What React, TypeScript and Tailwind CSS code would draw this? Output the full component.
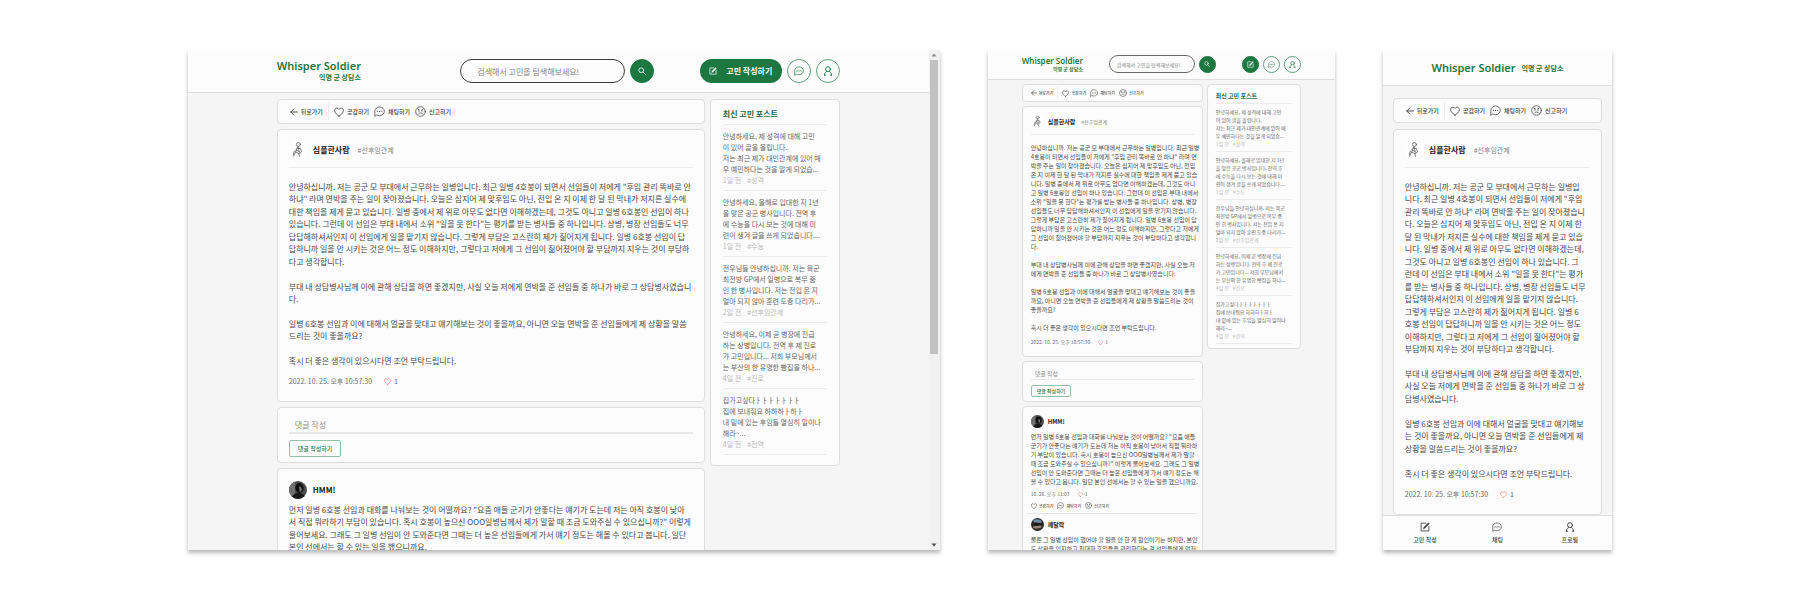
import React from "react";
import clsx from "clsx";

type Size = "lg" | "sm";

/* ---------- icons ---------- */

type IconProps = { className?: string };

const stroke = {
  fill: "none",
  stroke: "currentColor",
  strokeLinecap: "round",
  strokeLinejoin: "round",
} as const;

function ArrowLeft({ className }: IconProps) {
  return (
    <svg viewBox="0 0 16 16" className={className} aria-hidden="true" {...stroke} strokeWidth={1.8}>
      <path d="M15 8H1.5M7.5 2 1.5 8l6 6" />
    </svg>
  );
}

function Heart({ className }: IconProps) {
  return (
    <svg viewBox="0 0 16 16" className={className} aria-hidden="true" {...stroke} strokeWidth={1.3}>
      <path d="M8 14.6C5 12.6 1 9.6 1 5.6 1 3.4 2.6 1.8 4.6 1.8c1.5 0 2.7.8 3.4 2.1.7-1.3 1.9-2.1 3.4-2.1 2 0 3.6 1.6 3.6 3.8 0 4-4 7-7 9Z" />
    </svg>
  );
}

function Chat({ className }: IconProps) {
  return (
    <svg viewBox="0 0 16 16" className={className} aria-hidden="true" {...stroke} strokeWidth={1.1}>
      <path d="M1.2 14.6V7.8C1.2 4.2 4.2 1.4 8 1.4s7 2.8 7 6.3-3 6.3-7 6.3c-1.4 0-2.7-.3-3.8-.8Z" />
      <path d="M4.8 7.8h.1M8 7.8h.1M11.2 7.8h.1" strokeWidth={1.7} />
    </svg>
  );
}

function Frown({ className }: IconProps) {
  return (
    <svg viewBox="0 0 16 16" className={className} aria-hidden="true" {...stroke} strokeWidth={1.1}>
      <circle cx="8" cy="8" r="7" />
      <path d="M5 11.6c.8-1 1.8-1.5 3-1.5s2.2.5 3 1.5M4.3 4.8l2.2 1.1M11.7 4.8 9.5 5.9" />
      <path d="M5.6 7.1h.1M10.3 7.1h.1" strokeWidth={1.7} />
    </svg>
  );
}

function Search({ className }: IconProps) {
  return (
    <svg viewBox="0 0 16 16" className={className} aria-hidden="true" {...stroke} strokeWidth={1.6}>
      <circle cx="6.5" cy="6.5" r="4.8" />
      <path d="m10.2 10.2 4.6 4.6" />
    </svg>
  );
}

function Pencil({ className }: IconProps) {
  return (
    <svg viewBox="0 0 16 16" className={className} aria-hidden="true" {...stroke} strokeWidth={1.4}>
      <path d="M9.5 1.8H1.7v12.5h12.5V7" />
      <path d="m5.6 10.6.6-2.4 7.3-7 1.5 1.6-7.2 7.1Z" fill="currentColor" strokeWidth={0.8} />
    </svg>
  );
}

function Person({ className }: IconProps) {
  return (
    <svg viewBox="0 0 16 16" className={className} aria-hidden="true" {...stroke} strokeWidth={1.5}>
      <circle cx="8" cy="5" r="3.9" />
      <path d="M5.8 8.4c0 1.8-3.6 2.2-3.6 6.2M10.2 8.4c0 1.8 3.6 2.2 3.6 6.2M2.2 14.6h2M11.8 14.6h2" />
    </svg>
  );
}

function Sketch({ className }: IconProps) {
  return (
    <svg viewBox="0 0 18 18" className={className} aria-hidden="true" {...stroke} strokeWidth={0.7}>
      <circle cx="9" cy="9" r="9" fill="#ffffff" stroke="none" />
      <g stroke="#4a4a4a">
        <circle cx="9.4" cy="3.4" r="2" />
        <path d="M9 5.4 8 7.2l3.4.4 1.2 3.4-2.4 1.4M8 7.2 6.6 11l2.8 1.4M9.6 6.5l.4 4M6.6 11l-2 4.2M9.6 12.2l1 3.3M7 8.8l3.6 2.2M5.4 10l-1.2 4" />
      </g>
    </svg>
  );
}

function Portrait({ className, tone }: IconProps & { tone: "mono" | "blue" }) {
  return (
    <svg viewBox="0 0 18 18" className={clsx("rounded-full", className)} aria-hidden="true">
      <rect width="18" height="18" fill={tone === "mono" ? "#4c4c4c" : "#2b2724"} />
      {tone === "mono" ? (
        <>
          <path d="M0 0h6v18H0z" fill="#707070" />
          <ellipse cx="10.5" cy="7" rx="4.2" ry="5" fill="#111111" />
          <path d="M10 5.5c2 0 3 1 2.6 4l-1.8 2Z" fill="#777777" />
          <path d="M2 18c1-5 5-6 8-6s6 2 7 6Z" fill="#191919" />
        </>
      ) : (
        <>
          <path d="M3 3c4-2 8-2 12 1l-1 3-10-1Z" fill="#6d8fa3" />
          <path d="M2 13c3-3 7-2 9-4l4 2-2 3-6 1Z" fill="#9a8878" />
          <path d="M4 8l8-1 3 3-8 1Z" fill="#151515" />
        </>
      )}
    </svg>
  );
}

/* ---------- content ---------- */

const bodyWide = [
  [
    "안녕하십니까. 저는 공군 모 부대에서 근무하는 일병입니다. 최근 일병 4호봉이 되면서 선임들이 저에게 \"후임 관리 똑바로 안",
    "하냐\" 라며 면박을 주는 일이 잦아졌습니다. 오늘은 심지어 제 맞후임도 아닌, 전입 온 지 이제 한 달 된 막내가 저지른 실수에",
    "대한 책임을 제게 묻고 있습니다. 일병 중에서 제 위로 아무도 없다면 이해하겠는데, 그것도 아니고 일병 6호봉인 선임이 하나",
    "있습니다. 그런데 이 선임은 부대 내에서 소위 \"일을 못 한다\"는 평가를 받는 병사들 중 하나입니다. 상병, 병장 선임들도 너무",
    "답답해하셔서인지 이 선임에게 일을 맡기지 않습니다. 그렇게 부담은 고스란히 제가 짊어지게 됩니다. 일병 6호봉 선임이 답",
    "답하니까 일을 안 시키는 것은 어느 정도 이해하지만, 그렇다고 저에게 그 선임이 짊어졌어야 할 부담까지 지우는 것이 부당하",
    "다고 생각합니다.",
  ],
  [
    "부대 내 상담병사님께 이에 관해 상담을 하면 좋겠지만, 사실 오늘 저에게 면박을 준 선임들 중 하나가 바로 그 상담병사였습니",
    "다.",
  ],
  [
    "일병 6호봉 선임과 이에 대해서 얼굴을 맞대고 얘기해보는 것이 좋을까요, 아니면 오늘 면박을 준 선임들에게 제 상황을 말씀",
    "드리는 것이 좋을까요?",
  ],
  ["혹시 더 좋은 생각이 있으시다면 조언 부탁드립니다."],
];

const bodyMedium = [
  [
    "안녕하십니까. 저는 공군 모 부대에서 근무하는 일병입니다. 최근 일병",
    "4호봉이 되면서 선임들이 저에게 \"후임 관리 똑바로 안 하냐\" 라며 면",
    "박을 주는 일이 잦아졌습니다. 오늘은 심지어 제 맞후임도 아닌, 전입",
    "온 지 이제 한 달 된 막내가 저지른 실수에 대한 책임을 제게 묻고 있습",
    "니다. 일병 중에서 제 위로 아무도 없다면 이해하겠는데, 그것도 아니",
    "고 일병 6호봉인 선임이 하나 있습니다. 그런데 이 선임은 부대 내에서",
    "소위 \"일을 못 한다\"는 평가를 받는 병사들 중 하나입니다. 상병, 병장",
    "선임들도 너무 답답해하셔서인지 이 선임에게 일을 맡기지 않습니다.",
    "그렇게 부담은 고스란히 제가 짊어지게 됩니다. 일병 6호봉 선임이 답",
    "답하니까 일을 안 시키는 것은 어느 정도 이해하지만, 그렇다고 저에게",
    "그 선임이 짊어졌어야 할 부담까지 지우는 것이 부당하다고 생각합니",
    "다.",
  ],
  [
    "부대 내 상담병사님께 이에 관해 상담을 하면 좋겠지만, 사실 오늘 저",
    "에게 면박을 준 선임들 중 하나가 바로 그 상담병사였습니다.",
  ],
  [
    "일병 6호봉 선임과 이에 대해서 얼굴을 맞대고 얘기해보는 것이 좋을",
    "까요, 아니면 오늘 면박을 준 선임들에게 제 상황을 말씀드리는 것이",
    "좋을까요?",
  ],
  ["혹시 더 좋은 생각이 있으시다면 조언 부탁드립니다."],
];

const bodyNarrow = [
  [
    "안녕하십니까. 저는 공군 모 부대에서 근무하는 일병입",
    "니다. 최근 일병 4호봉이 되면서 선임들이 저에게 \"후임",
    "관리 똑바로 안 하냐\" 라며 면박을 주는 일이 잦아졌습니",
    "다. 오늘은 심지어 제 맞후임도 아닌, 전입 온 지 이제 한",
    "달 된 막내가 저지른 실수에 대한 책임을 제게 묻고 있습",
    "니다. 일병 중에서 제 위로 아무도 없다면 이해하겠는데,",
    "그것도 아니고 일병 6호봉인 선임이 하나 있습니다. 그",
    "런데 이 선임은 부대 내에서 소위 \"일을 못 한다\"는 평가",
    "를 받는 병사들 중 하나입니다. 상병, 병장 선임들도 너무",
    "답답해하셔서인지 이 선임에게 일을 맡기지 않습니다.",
    "그렇게 부담은 고스란히 제가 짊어지게 됩니다. 일병 6",
    "호봉 선임이 답답하니까 일을 안 시키는 것은 어느 정도",
    "이해하지만, 그렇다고 저에게 그 선임이 짊어졌어야 할",
    "부담까지 지우는 것이 부당하다고 생각합니다.",
  ],
  [
    "부대 내 상담병사님께 이에 관해 상담을 하면 좋겠지만,",
    "사실 오늘 저에게 면박을 준 선임들 중 하나가 바로 그 상",
    "담병사였습니다.",
  ],
  [
    "일병 6호봉 선임과 이에 대해서 얼굴을 맞대고 얘기해보",
    "는 것이 좋을까요, 아니면 오늘 면박을 준 선임들에게 제",
    "상황을 말씀드리는 것이 좋을까요?",
  ],
  ["혹시 더 좋은 생각이 있으시다면 조언 부탁드립니다."],
];

const replyWide = [
  [
    "먼저 일병 6호봉 선임과 대화를 나눠보는 것이 어떨까요? \"요즘 애들 군기가 안좋다는 얘기가 도는데 저는 아직 호봉이 낮아",
    "서 직접 뭐라하기 부담이 있습니다. 혹시 호봉이 높으신 OOO일병님께서 제가 말할 때 조금 도와주실 수 있으십니까?\" 이렇게",
    "물어보세요. 그래도 그 일병 선임이 안 도와준다면 그때는 더 높은 선임들에게 가서 얘기 정도는 해볼 수 있다고 봅니다. 일단",
    "본인 선에서는 할 수 있는 일을 했으니까요.",
  ],
];

const replyMedium = [
  [
    "먼저 일병 6호봉 선임과 대화를 나눠보는 것이 어떨까요? \"요즘 애들",
    "군기가 안좋다는 얘기가 도는데 저는 아직 호봉이 낮아서 직접 뭐라하",
    "기 부담이 있습니다. 혹시 호봉이 높으신 OOO일병님께서 제가 말할",
    "때 조금 도와주실 수 있으십니까?\" 이렇게 물어보세요. 그래도 그 일병",
    "선임이 안 도와준다면 그때는 더 높은 선임들에게 가서 얘기 정도는 해",
    "볼 수 있다고 봅니다. 일단 본인 선에서는 할 수 있는 일을 했으니까요.",
  ],
];

const secondReply = [
  [
    "물론 그 일병 선임이 했어야 할 일을 안 한 게 원인이기는 하지만, 본인",
    "도 상황을 인지하고 최대한 후임들을 관리한다는 걸 선임들에게 먼저",
  ],
];

const posts = [
  {
    lines: ["안녕하세요, 제 성격에 대해 고민", "이 있어 글을 올립니다.", "저는 최근 제가 대인관계에 있어 매", "우 예민하다는 것을 알게 되었습..."],
    age: "1일 전",
    tag: "#성격",
  },
  {
    lines: ["안녕하세요, 올해로 입대한 지 1년", "을 맞은 공군 병사입니다. 전역 후", "에 수능을 다시 보는 것에 대해 미", "련이 생겨 글을 쓰게 되었습니다...."],
    age: "1일 전",
    tag: "#수능",
  },
  {
    lines: ["전우님들 안녕하십니까. 저는 육군", "최전방 GP에서 일병으로 복무 중", "인 한 병사입니다. 저는 전입 온 지", "얼마 되지 않아 훈련 도중 다리가..."],
    age: "2일 전",
    tag: "#선후임관계",
  },
  {
    lines: ["안녕하세요, 이제 곧 병장에 진급", "하는 상병입니다. 전역 후 제 진로", "가 고민입니다... 저희 부모님께서", "는 부산의 한 유명한 빵집을 하나..."],
    age: "4일 전",
    tag: "#진로",
  },
  {
    lines: ["집가고싶다ㅏㅏㅏㅏㅏㅏㅏ", "집에 보내줘요 하하하ㅏ하ㅏ", "내 밑에 있는 후임들 열심히 일이나", "해라~..."],
    age: "4일 전",
    tag: "#전역",
  },
];

/* ---------- shared pieces ---------- */

function Card({ className, children }: { className?: string; children: React.ReactNode }) {
  return (
    <section className={clsx("shrink-0 rounded border border-[#dedede] bg-[#fcfcfc]", className)}>{children}</section>
  );
}

function Prose({ paragraphs, size }: { paragraphs: string[][]; size: Size }) {
  return (
    <div
      className={clsx(
        "flex flex-col whitespace-nowrap text-[#4a4a4a]",
        size === "lg" ? "gap-3 text-[8px]" : "gap-[9px] text-[6px]"
      )}
    >
      {paragraphs.map((lines) => (
        <p key={lines[0]}>
          {lines.map((line) => (
            <span
              key={line}
              className={clsx("block", size === "lg" ? "odd:leading-[13px] even:leading-[12px]" : "leading-[9px]")}
            >
              {line}
            </span>
          ))}
        </p>
      ))}
    </div>
  );
}

function Action({ icon, label, size }: { icon: React.ReactNode; label: string; size: Size }) {
  return (
    <button
      type="button"
      className={clsx(
        "flex items-center font-medium text-[#444444]",
        size === "lg" ? "gap-[3px] text-[6px]" : "gap-0.5 text-[4px]"
      )}
    >
      {icon}
      {label}
    </button>
  );
}

function Toolbar({ size }: { size: Size }) {
  const lg = size === "lg";
  const icon = lg ? "size-[11px]" : "size-2";
  return (
    <Card className={clsx("flex items-center", lg ? "h-[25px] gap-[5px] px-3" : "h-[18px] gap-1 px-2")}>
      <div className={clsx("flex items-center border-r border-[#ececec]", lg ? "h-[17px] pr-[5px]" : "h-3 pr-1")}>
        <Action size={size} icon={<ArrowLeft className={lg ? "size-2" : "size-[6px]"} />} label="뒤로가기" />
      </div>
      <Action size={size} icon={<Heart className={lg ? "size-[10px]" : "size-[7px]"} />} label="공감하기" />
      <Action size={size} icon={<Chat className={icon} />} label="채팅하기" />
      <Action size={size} icon={<Frown className={icon} />} label="신고하기" />
    </Card>
  );
}

function Meta({ date, size }: { date: string; size: Size }) {
  const lg = size === "lg";
  return (
    <div className={clsx("flex items-center text-[#6d6d6d]", lg ? "gap-3 text-[7px] leading-3" : "gap-2 text-[5px] leading-2")}>
      <time>{date}</time>
      <span className={clsx("flex items-center", lg ? "gap-[3px]" : "gap-0.5")}>
        <Heart className={clsx("text-[#ef6a6a]", lg ? "size-[7px]" : "size-[5px]")} />1
      </span>
    </div>
  );
}

function Article({ paragraphs, size }: { paragraphs: string[][]; size: Size }) {
  const lg = size === "lg";
  return (
    <Card className={lg ? "px-[11px] pt-[11px] pb-[14px]" : "px-2 pt-2 pb-[10px]"}>
      <header className={clsx("flex items-center border-b border-[#ececec]", lg ? "gap-1.5 pb-2" : "gap-1 pb-[6px]")}>
        <Sketch className={lg ? "size-[18px]" : "size-[13px]"} />
        <h2 className={clsx("font-bold text-[#222222]", lg ? "text-[8px] leading-3" : "text-[6px] leading-2")}>심플한사람</h2>
        <a href="#relations" className={clsx("ml-0.5 text-[#808080]", lg ? "text-[7px]" : "text-[5px]")}>
          #선후임관계
        </a>
      </header>
      <div className={lg ? "pt-3 pb-2" : "pt-2 pb-1.5"}>
        <Prose paragraphs={paragraphs} size={size} />
      </div>
      <Meta date="2022. 10. 25. 오후 10:57:30" size={size} />
    </Card>
  );
}

function CommentForm({ size }: { size: Size }) {
  const lg = size === "lg";
  return (
    <Card className={lg ? "px-[11px] pt-2 pb-[5px]" : "px-2 pt-[6px] pb-1"}>
      <form className={clsx("flex flex-col items-start", lg ? "gap-1.5" : "gap-[5px]")}>
        <input
          type="text"
          aria-label="댓글 작성"
          placeholder="댓글 작성"
          className={clsx(
            "w-full border-[#e8e8e8] bg-transparent outline-none placeholder:text-[#8d8d8d]",
            lg ? "h-[18px] border-b-2 px-1.5 text-[8px]" : "h-3 border-b px-1 text-[6px]"
          )}
        />
        <button
          type="button"
          className={clsx(
            "rounded-xs border border-[#93c2a8] font-medium text-[#2c7a4d]",
            lg ? "h-[17px] px-2 text-[6px]" : "h-3 px-[5px] text-[5px]"
          )}
        >
          댓글 작성하기
        </button>
      </form>
    </Card>
  );
}

function ReplyHead({ name, tone, size }: { name: string; tone: "mono" | "blue"; size: Size }) {
  const lg = size === "lg";
  return (
    <header className={clsx("flex items-center", lg ? "gap-1.5" : "gap-1")}>
      <Portrait tone={tone} className={lg ? "size-[18px]" : "size-[13px]"} />
      <h3 className={clsx("font-bold text-[#222222]", lg ? "text-[8px] leading-3" : "text-[6px] leading-2")}>{name}</h3>
    </header>
  );
}

function Latest({ size }: { size: Size }) {
  const lg = size === "lg";
  return (
    <aside
      className={clsx(
        "shrink-0 self-start rounded border border-[#dedede] bg-[#fcfcfc]",
        lg ? "w-[130px] px-3 pt-2 pb-[10px]" : "w-[94px] px-2 pt-[6px] pb-1"
      )}
    >
      <h2
        className={clsx(
          "border-b border-[#ececec] font-bold text-[#1f6b40]",
          lg ? "pb-1 text-[8px] leading-3" : "pb-0.5 text-[6px] leading-[10px]"
        )}
      >
        최신 고민 포스트
      </h2>
      <ul>
        {posts.map((post) => (
          <li
            key={post.lines[0]}
            className={clsx(
              "border-b border-[#ececec] whitespace-nowrap",
              lg ? "pt-1.5 pb-1 text-[7px] leading-[11px]" : "pt-1 pb-[3px] text-[5px] leading-2"
            )}
          >
            <a href="#post" className="block text-[#666666]">
              {post.lines.map((line) => (
                <span key={line} className="block">
                  {line}
                </span>
              ))}
            </a>
            <p className={clsx("flex text-[#b9b9b9]", lg ? "gap-1.5" : "gap-1")}>
              <span>{post.age}</span>
              <span>{post.tag}</span>
            </p>
          </li>
        ))}
      </ul>
    </aside>
  );
}

function Logo({ size }: { size: Size }) {
  const lg = size === "lg";
  return (
    <a href="#home" className="flex flex-col items-end whitespace-nowrap text-[#1c7741]">
      <span
        className={clsx(
          "font-['Noto_Sans',sans-serif] font-semibold",
          lg ? "text-[11px] leading-[13px]" : "text-[8px] leading-[9px]"
        )}
      >
        Whisper Soldier
      </span>
      <span className={clsx("font-bold", lg ? "text-[7px] leading-[11px]" : "text-[5px] leading-[7px]")}>익명 군 상담소</span>
    </a>
  );
}

function RoundButton({
  label,
  filled,
  size,
  children,
}: {
  label: string;
  filled?: boolean;
  size: Size;
  children: React.ReactNode;
}) {
  return (
    <button
      type="button"
      aria-label={label}
      className={clsx(
        "flex shrink-0 items-center justify-center rounded-full border",
        size === "lg" ? "size-6" : "size-[17px]",
        filled ? "border-[#1c7741] bg-[#1c7741] text-white" : "border-[#5fa27c] bg-[#fcfcfc] text-[#1c7741]"
      )}
    >
      {children}
    </button>
  );
}

function TopBar({ size }: { size: Size }) {
  const lg = size === "lg";
  const icon = lg ? "size-[10px]" : "size-[7px]";
  return (
    <header className={clsx("shrink-0 border-b border-[#dedede] bg-[#fcfcfc]", lg ? "h-[43px] pt-[9px]" : "h-[30px] pt-[5px]")}>
      <div className={clsx("mx-auto flex items-center justify-between", lg ? "max-w-[563px]" : "max-w-[279px]")}>
        <Logo size={size} />
        <form role="search" className={clsx("flex items-center", lg ? "ml-[54px] gap-[5px]" : "gap-1")}>
          <input
            type="text"
            aria-label="고민 검색"
            placeholder="검색해서 고민을 탐색해보세요!"
            className={clsx(
              "rounded-full border bg-[#fcfcfc] outline-none placeholder:text-[#858585]",
              lg ? "h-6 w-[165px] border-[#3d3d3d] px-4 text-[8px]" : "h-[18px] w-[86px] border-[#6a6a6a] px-[7px] text-[5px]"
            )}
          />
          <RoundButton label="검색" filled size={size}>
            <Search className={lg ? "size-2" : "size-[6px]"} />
          </RoundButton>
        </form>
        <nav className={clsx("flex items-center", lg ? "gap-[5px]" : "gap-1")}>
          {lg ? (
            <button
              type="button"
              className="flex h-6 w-[82px] items-center justify-center gap-[9px] rounded-full bg-[#1c7741] text-[8px] font-bold text-white"
            >
              <Pencil className="size-2" />
              고민 작성하기
            </button>
          ) : (
            <RoundButton label="고민 작성하기" filled size={size}>
              <Pencil className="size-[7px]" />
            </RoundButton>
          )}
          <RoundButton label="채팅" size={size}>
            <Chat className={icon} />
          </RoundButton>
          <RoundButton label="프로필" size={size}>
            <Person className={icon} />
          </RoundButton>
        </nav>
      </div>
    </header>
  );
}

/* ---------- the three screens ---------- */

const frame = "min-h-0 min-w-0 overflow-hidden bg-[#f5f5f5] shadow-[0_3px_4px_rgba(0,0,0,0.28)]";

function Scrollbar() {
  return (
    <div className="flex w-[11px] shrink-0 flex-col items-center bg-[#f1f1f1]" aria-hidden="true">
      <svg viewBox="0 0 10 10" className="size-[10px] fill-[#8a8a8a]">
        <path d="M5 3.5 7.5 6.5h-5Z" />
      </svg>
      <div className="w-2 grow-[294] basis-0 bg-[#c1c1c1]" />
      <div className="grow-[186] basis-0" />
      <svg viewBox="0 0 10 10" className="size-[10px] fill-[#505050]">
        <path d="M5 6.5 2.5 3.5h5Z" />
      </svg>
    </div>
  );
}

function Desktop() {
  return (
    <div className={clsx(frame, "flex")}>
      <div className="flex min-w-0 grow flex-col">
        <TopBar size="lg" />
        <div className="mx-auto flex min-h-0 w-full max-w-[563px] gap-[5px] pt-1.5">
          <main className="flex min-w-0 grow flex-col gap-[5px]">
            <Toolbar size="lg" />
            <Article paragraphs={bodyWide} size="lg" />
            <CommentForm size="lg" />
            <Card className="px-[11px] pt-3 pb-3">
              <ReplyHead name="HMM!" tone="mono" size="lg" />
              <div className="pt-1">
                <Prose paragraphs={replyWide} size="lg" />
              </div>
            </Card>
          </main>
          <Latest size="lg" />
        </div>
      </div>
      <Scrollbar />
    </div>
  );
}

function Tablet() {
  return (
    <div className={clsx(frame, "flex flex-col")}>
      <TopBar size="sm" />
      <div className="mx-auto flex min-h-0 w-full max-w-[279px] gap-1 pt-1">
        <main className="flex min-w-0 grow flex-col gap-1">
          <Toolbar size="sm" />
          <Article paragraphs={bodyMedium} size="sm" />
          <CommentForm size="sm" />
          <Card className="px-1 pt-2">
            <div className="px-1">
              <ReplyHead name="HMM!" tone="mono" size="sm" />
              <div className="py-1">
                <Prose paragraphs={replyMedium} size="sm" />
              </div>
              <Meta date="10. 26. 오후 11:03" size="sm" />
              <div className="flex gap-1 py-1">
                <Action size="sm" icon={<Heart className="size-[6px]" />} label="공감하기" />
                <Action size="sm" icon={<Chat className="size-[7px]" />} label="채팅하기" />
                <Action size="sm" icon={<Frown className="size-[7px]" />} label="신고하기" />
              </div>
            </div>
            <div className="border-t border-[#e6e6e6] px-1 pt-1">
              <ReplyHead name="깨달락" tone="blue" size="sm" />
              <div className="pt-1">
                <Prose paragraphs={secondReply} size="sm" />
              </div>
            </div>
          </Card>
        </main>
        <Latest size="sm" />
      </div>
    </div>
  );
}

function Tab({ icon, label }: { icon: React.ReactNode; label: string }) {
  return (
    <a href="#tab" className="flex flex-col items-center gap-1 text-[6px] leading-2 font-medium text-[#444444]">
      {icon}
      {label}
    </a>
  );
}

function Mobile() {
  return (
    <div className={clsx(frame, "flex flex-col")}>
      <header className="flex h-9 shrink-0 items-center justify-center border-b border-[#dedede] bg-[#fcfcfc]">
        <a href="#home" className="flex items-center gap-1.5 whitespace-nowrap text-[#1c7741]">
          <span className="font-['Noto_Sans',sans-serif] text-[11px] leading-4 font-semibold">Whisper Soldier</span>
          <span className="text-[7px] leading-3 font-bold">익명 군 상담소</span>
        </a>
      </header>
      <div className="flex min-h-0 grow flex-col gap-1.5 overflow-hidden px-[10px] pt-3">
        <Toolbar size="lg" />
        <Article paragraphs={bodyNarrow} size="lg" />
      </div>
      <nav className="grid h-[35px] shrink-0 grid-cols-3 border-t border-[#dedede] bg-[#fcfcfc] px-1.5 pt-1.5">
        <Tab icon={<Pencil className="size-[10px]" />} label="고민 작성" />
        <Tab icon={<Chat className="size-[10px]" />} label="채팅" />
        <Tab icon={<Person className="size-[10px]" />} label="프로필" />
      </nav>
    </div>
  );
}

export default function App() {
  return (
    <div className="grid h-screen grid-cols-[751fr_347fr_229fr] grid-rows-1 gap-12 bg-white px-[188px] py-[50px] font-['Noto_Sans_CJK_KR',sans-serif]">
      <Desktop />
      <Tablet />
      <Mobile />
    </div>
  );
}
